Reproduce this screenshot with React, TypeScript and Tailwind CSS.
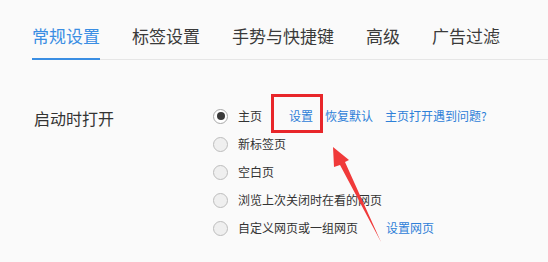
import React from "react";

const font = { fontFamily: '"Noto Sans CJK SC", "Noto Sans", sans-serif' };

function Radio({ checked }: { checked?: boolean }) {
  return checked ? (
    <span className="flex h-[15px] w-[15px] shrink-0 items-center justify-center rounded-full border border-[#a8a8a8] bg-white">
      <span className="h-[8px] w-[8px] rounded-full bg-[#3a3a3a]" />
    </span>
  ) : (
    <span className="h-[15px] w-[15px] shrink-0 rounded-full border border-[#bdbdbd] bg-[#efefef]" />
  );
}

export default function App() {
  const tabs = ["常规设置", "标签设置", "手势与快捷键", "高级", "广告过滤"];
  return (
    <div className="relative h-[262px] w-[548px] overflow-hidden bg-[#fafafa] text-[#333333]" style={font}>
      <div className="ml-[32px] flex gap-[32px] border-b border-[#e6e6e6] pt-[24px]">
        {tabs.map((t, i) => (
          <div
            key={t}
            className={
              i === 0
                ? "-mb-px border-b-2 border-[#3a8ee3] pb-[9px] text-[17px] leading-[24px] text-[#3a8ee3]"
                : "pb-[11px] text-[17px] leading-[24px] text-[#3a3a3a]"
            }
          >
            {t}
          </div>
        ))}
      </div>

      <div className="mt-[42px] flex">
        <div className="w-[213px] pl-[34px] pt-[2px] text-[16px] leading-[28px] text-[#333333]">启动时打开</div>
        <div className="flex flex-col text-[12px]">
          <div className="flex h-[28px] items-center">
            <Radio checked />
            <span className="ml-[10px]">主页</span>
            <span className="ml-[27px] text-[#2e80d8]">设置</span>
            <span className="ml-[12px] text-[#2e80d8]">恢复默认</span>
            <span className="ml-[12px] text-[#2e80d8]">主页打开遇到问题?</span>
          </div>
          <div className="flex h-[28px] items-center">
            <Radio />
            <span className="ml-[10px]">新标签页</span>
          </div>
          <div className="flex h-[28px] items-center">
            <Radio />
            <span className="ml-[10px]">空白页</span>
          </div>
          <div className="flex h-[28px] items-center">
            <Radio />
            <span className="ml-[10px]">浏览上次关闭时在看的网页</span>
          </div>
          <div className="flex h-[28px] items-center">
            <Radio />
            <span className="ml-[10px]">自定义网页或一组网页</span>
            <span className="ml-[28px] text-[#2e80d8]">设置网页</span>
          </div>
        </div>
      </div>

      <div className="absolute left-[271px] top-[94px] h-[39px] w-[52px] border-[3px] border-[#e8262a]" />

      <svg className="absolute left-0 top-0" width="548" height="262" viewBox="0 0 548 262">
        <polygon points="333,147 349,160 345,162 381,242 340,165 334,167" fill="#f03a3a" />
      </svg>
    </div>
  );
}
